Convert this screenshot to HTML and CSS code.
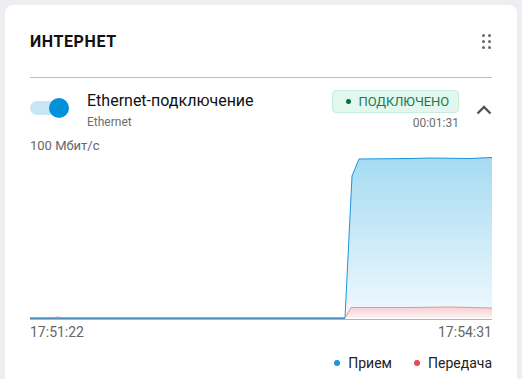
FILE: index.html
```html
<!DOCTYPE html>
<html lang="ru">
<head>
<meta charset="utf-8">
<link rel="stylesheet" href="styles.css">
</head>
<body>
<div class="card">
  <div class="header">
    <h2 class="title">ИНТЕРНЕТ</h2>
    <svg class="drag" width="10" height="15" viewBox="0 0 10 15">
      <circle cx="1.5" cy="1.5" r="1.5"/><circle cx="7.5" cy="1.5" r="1.5"/>
      <circle cx="1.5" cy="7.5" r="1.5"/><circle cx="7.5" cy="7.5" r="1.5"/>
      <circle cx="1.5" cy="13.5" r="1.5"/><circle cx="7.5" cy="13.5" r="1.5"/>
    </svg>
  </div>
  <div class="conn">
    <div class="toggle"><span class="thumb"></span></div>
    <div class="names">
      <div class="name">Ethernet-подключение</div>
      <div class="sub">Ethernet</div>
    </div>
    <div class="status">
      <div class="badge"><span class="bdot"></span>ПОДКЛЮЧЕНО</div>
      <div class="time">00:01:31</div>
    </div>
    <svg class="chev" width="16" height="10" viewBox="0 0 16 10">
      <path d="M1.5 8.5 L8 2 L14.5 8.5" fill="none" stroke="#555" stroke-width="2.4"/>
    </svg>
  </div>
  <div class="speed">100 Мбит/с</div>
  <svg class="chart" width="462" height="166" viewBox="0 0 462 166">
    <defs>
      <linearGradient id="gb" x1="0" y1="0" x2="0" y2="1">
        <stop offset="0" stop-color="#a6dbf2"/>
        <stop offset="1" stop-color="#f0f9fd"/>
      </linearGradient>
      <linearGradient id="gr" x1="0" y1="0" x2="0" y2="1">
        <stop offset="0" stop-color="#f6d0d3"/>
        <stop offset="1" stop-color="#fdf2f3"/>
      </linearGradient>
    </defs>
    <path d="M0 163 L315 163 L322 21 L329 4 L380 3.5 L400 3 L440 3.5 L462 2.5 L462 163 Z" fill="url(#gb)"/>
    <path d="M315 163 L321 152.5 L380 152.5 L420 152 L462 153 L462 163 Z" fill="url(#gr)"/>
    <path d="M0 163 L315 163 L322 21 L329 4 L380 3.5 L400 3 L440 3.5 L462 2.5" fill="none" stroke="#1a96dc" stroke-width="1"/>
    <path d="M0 163 L22 163 L28 162 L34 163 L315 163 L321 152.5 L380 152.5 L420 152 L462 153" fill="none" stroke="#ee8f93" stroke-width="1"/>
    <line x1="0" y1="163.5" x2="315" y2="163.5" stroke="#4f8fc0" stroke-width="1.5"/>
    <line x1="0" y1="164.5" x2="462" y2="164.5" stroke="#b5b5b5" stroke-width="1"/>
  </svg>
  <div class="times"><span>17:51:22</span><span>17:54:31</span></div>
  <div class="legend">
    <span class="li"><span class="ld blue"></span>Прием</span>
    <span class="li"><span class="ld red"></span>Передача</span>
  </div>
</div>
</body>
</html>
```
FILE: styles.css
```css
html, body { margin: 0; padding: 0; }
body {
  background: #eceef1;
  font-family: Roboto, "Liberation Sans", sans-serif;
  padding: 5px 5px 0;
  height: 374px;
  overflow: hidden;
}
.card {
  background: #fff;
  border-radius: 8px 8px 0 0;
  padding: 0 25px 20px;
  height: 380px;
  box-sizing: border-box;
}
.header {
  height: 72px;
  display: flex;
  align-items: center;
  justify-content: space-between;
  border-bottom: 1px solid #bdbdbd;
}
.title {
  margin: 0;
  font-size: 16px;
  font-weight: 700;
  letter-spacing: 0.6px;
  color: #111;
  line-height: 20px;
  padding-top: 1px;
}
.drag { fill: #6b6b6b; margin-right: 0; }
.conn {
  display: flex;
  align-items: flex-start;
  padding-top: 12px;
  height: 60px;
  box-sizing: border-box;
}
.toggle {
  position: relative;
  width: 30px;
  height: 14px;
  border-radius: 7px;
  background: #c6e6f6;
  margin-top: 11px;
  margin-right: 27px;
}
.thumb {
  position: absolute;
  right: -9px;
  top: -3px;
  width: 20px;
  height: 20px;
  border-radius: 50%;
  background: #0091da;
}
.names { flex: 1; }
.name { font-size: 16px; color: #111; line-height: 20px; margin-top: 1px; }
.sub { font-size: 12px; color: #6e6e6e; line-height: 14px; margin-top: 4px; }
.status { display: flex; flex-direction: column; align-items: flex-end; }
.badge {
  display: flex;
  align-items: center;
  height: 23px;
  box-sizing: border-box;
  padding: 0 9px 0 13px;
  background: #e2f8ee;
  border: 1px solid #c6eedc;
  border-radius: 4px;
  font-size: 13px;
  letter-spacing: -0.1px;
  color: #1c7a4e;
}
.bdot {
  width: 5px; height: 5px; border-radius: 50%;
  background: #0d6b41;
  margin-right: 8px;
}
.time { font-size: 12px; color: #6e6e6e; line-height: 14px; margin-top: 3px; }
.chev { margin: 15px 0 0 17px; }
.speed { font-size: 13px; color: #666; line-height: 16px; }
.chart { display: block; margin-top: 1px; }
.times {
  display: flex; justify-content: space-between;
  font-size: 14px; color: #666; line-height: 16px; margin-top: 3px;
}
.legend {
  display: flex; justify-content: flex-end; gap: 22px;
  margin-top: 15px; font-size: 14px; color: #222; line-height: 16px;
}
.li { display: flex; align-items: center; }
.ld { width: 6px; height: 6px; border-radius: 50%; margin-right: 8px; }
.ld.blue { background: #1a96dc; }
.ld.red { background: #e84a4f; }
```
